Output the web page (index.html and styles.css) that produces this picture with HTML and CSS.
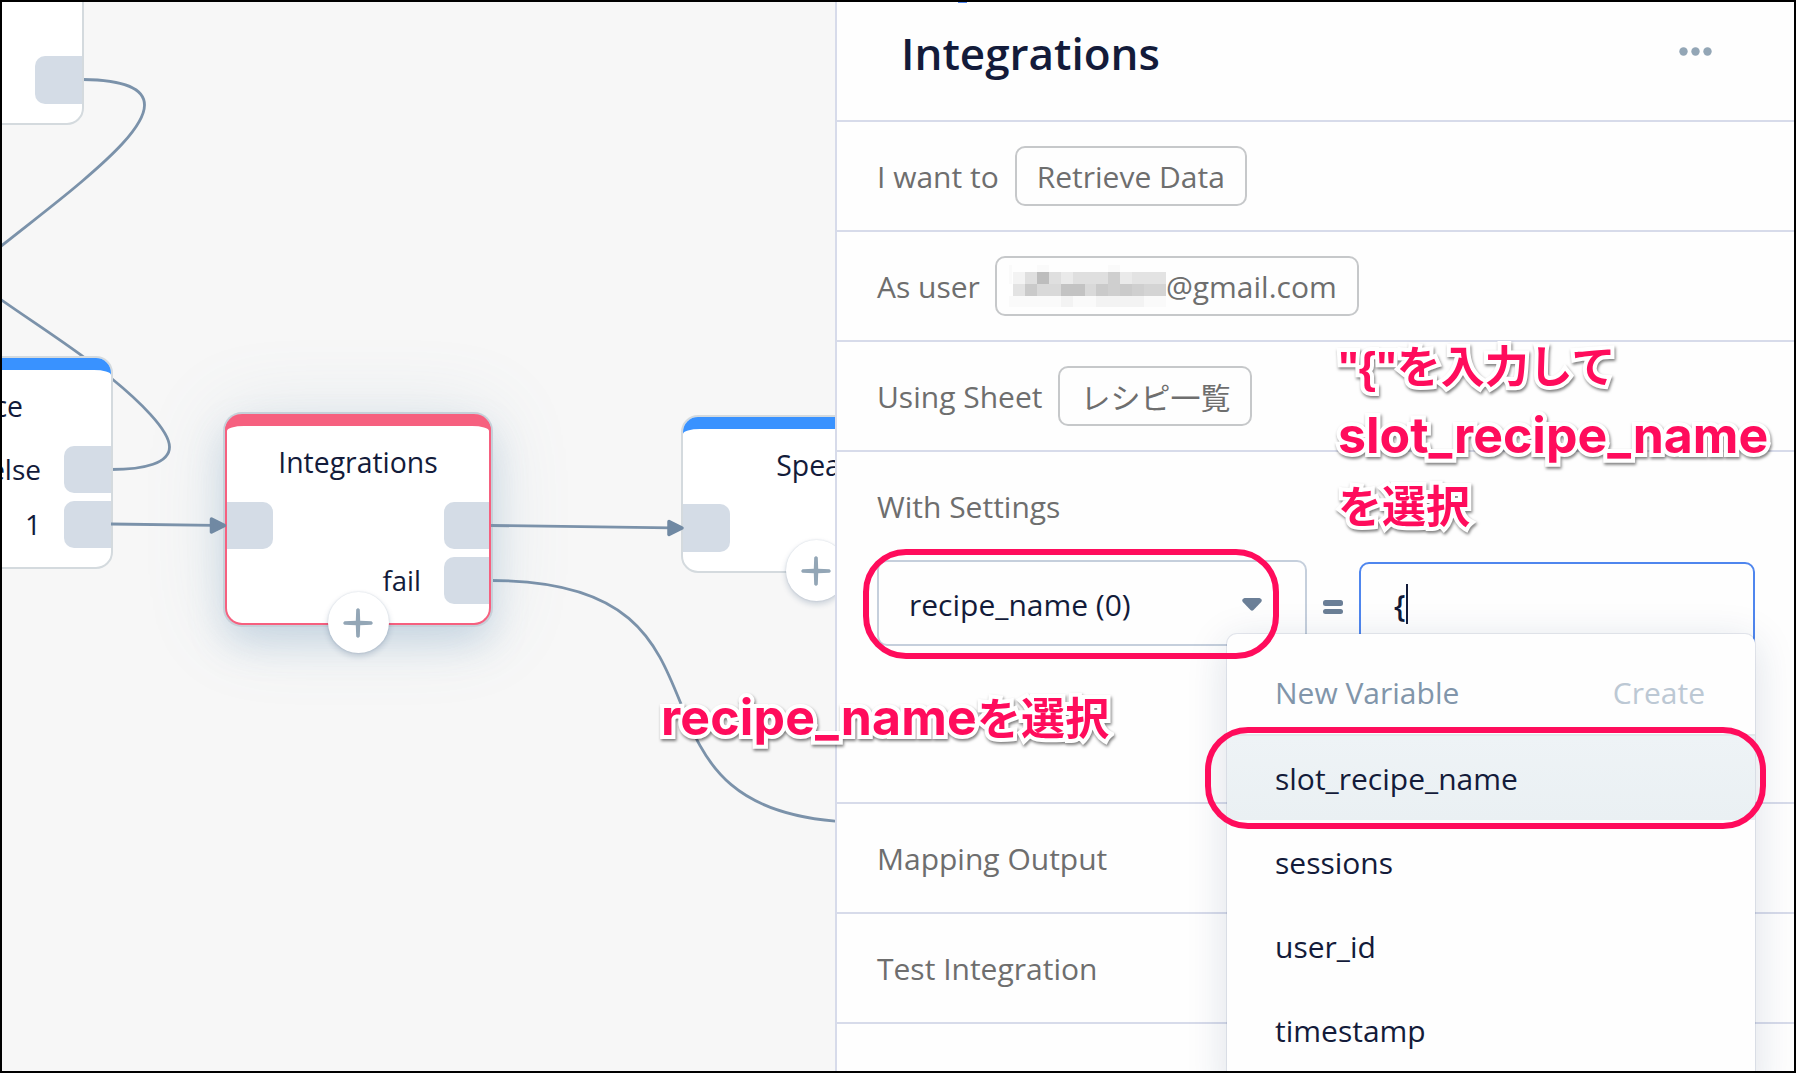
FILE: index.html
```html
<!DOCTYPE html>
<html lang="ja">
<head>
<meta charset="utf-8">
<title>Integrations</title>
<link rel="stylesheet" href="styles.css">
</head>
<body>
<div class="app">
  <main class="canvas">
    <svg class="wires" width="833" height="1069" viewBox="2 2 833 1069">
      <path d="M83 79.5C124 80 144.5 88 144.5 105C144.5 127 107 160 83 180.5C58 202 30 223 0 247"/>
      <path d="M0 299C30 320 58 338 85 358L111 378C138 400 169.5 430 169.5 447C169.5 463 145 469.5 111 469.5"/>
      <path d="M491 580.5C771 580.5 589 822.5 869 822.5"/>
    </svg>

    <section class="node node-start">
      <span class="port port-right p-start"></span>
    </section>

    <section class="node node-choice">
      <span class="bar"></span>
      <h2 class="node-title t-choice">Choice</h2>
      <span class="port-label l-else">else</span><span class="port port-right p-else"></span>
      <span class="port-label l-one">1</span><span class="port port-right p-one"></span>
    </section>

    <section class="node node-active">
      <span class="bar"></span>
      <h2 class="node-title">Integrations</h2>
      <span class="port port-left p-in"></span>
      <span class="port port-right p-ok"></span>
      <span class="port-label l-fail">fail</span><span class="port port-right p-fail"></span>
    </section>

    <section class="node node-speak">
      <span class="bar"></span>
      <h2 class="node-title t-speak">Speak</h2>
      <span class="port port-left p-speak"></span>
    </section>

    <svg class="wires" width="833" height="1069" viewBox="2 2 833 1069">
      <path d="M111 524L214 525.3M491 525.5L671 527.8"/>
      <path class="arrow" d="M211.5 519L224.5 525.5L211.5 532Z"/>
      <path class="arrow" d="M669 521.5L682 528L669 534.5Z"/>
    </svg>

    <button class="add add-active"><svg width="30" height="30" viewBox="0 0 30 30"><path d="M13.2 1.5Q15 -1 16.8 1.5L17.2 12.8L28.5 13.2Q31 15 28.5 16.8L17.2 17.2L16.8 28.5Q15 31 13.2 28.5L12.8 17.2L1.5 16.8Q-1 15 1.5 13.2L12.8 12.8Z"/></svg></button>
    <button class="add add-speak"><svg width="30" height="30" viewBox="0 0 30 30"><path d="M13.2 1.5Q15 -1 16.8 1.5L17.2 12.8L28.5 13.2Q31 15 28.5 16.8L17.2 17.2L16.8 28.5Q15 31 13.2 28.5L12.8 17.2L1.5 16.8Q-1 15 1.5 13.2L12.8 12.8Z"/></svg></button>
  </main>

  <aside class="panel">
    <header class="panel-head">
      <span class="tab-mark"></span>
      <h1>Integrations</h1>
      <svg class="dots" width="33" height="9" viewBox="0 0 33 9"><circle cx="4.5" cy="4.5" r="4.2"/><circle cx="16.5" cy="4.5" r="4.2"/><circle cx="28.5" cy="4.5" r="4.2"/></svg>
    </header>
    <div class="row"><span>I want to</span><span class="pill">Retrieve Data</span></div>
    <div class="row row-user"><span>As user</span><span class="pill pill-mail">
      <svg class="mosaic" width="157" height="42" viewBox="0 0 157 42" shape-rendering="crispEdges">
        <path fill="#fafafa" d="M28 0h12v7H28zM0 0h3v19H0zM99 0h12v7H99zM0 31h157v11H0z"/>
        <path fill="#f3f3f3" d="M4 7h12v12H4zM52 31h12v11H52zM87 31h48v11H87z"/>
        <path fill="#eaeaea" d="M52 7h12v12H52zM111 7h12v12H111z"/>
        <path fill="#e3e3e3" d="M123 7h34v12H123zM4 19h12v12H4z"/>
        <path fill="#dfdfdf" d="M16 7h12v12H16zM40 7h12v12H40zM64 7h35v12H64z"/>
        <path fill="#bdbdbd" d="M28 7h12v12H28z"/>
        <path fill="#c3c3c3" d="M52 19h24v12H52z"/>
        <path fill="#cacaca" d="M16 19h12v12H16zM87 19h12v12H87zM111 19h12v12H111z"/>
        <path fill="#cfcfcf" d="M99 7h12v24H99zM123 19h12v12H123z"/>
        <path fill="#d9d9d9" d="M28 19h24v12H28zM76 19h11v12H76z"/>
        <path fill="#d4d4d4" d="M135 19h22v12H135z"/>
      </svg>@gmail.com</span></div>
    <div class="row"><span>Using Sheet</span><span class="pill pill-sheet">レシピ一覧</span></div>
    <div class="settings">
      <div class="settings-label">With Settings</div>
      <div class="settings-fields">
        <div class="select"><span>recipe_name (0)</span><svg width="20" height="13" viewBox="0 0 20 13"><path d="M2.5 0H17.5Q21 1 19.2 4L11.5 12Q10 13.5 8.5 12L.8 4Q-1 1 2.5 0Z"/></svg></div>
        <div class="equals"><i></i><i></i></div>
        <div class="input">{<span class="cursor"></span></div>
      </div>
    </div>
    <div class="row">Mapping Output</div>
    <div class="row">Test Integration</div>

    <div class="menu">
      <div class="menu-new"><span>New Variable</span><span class="create">Create</span></div>
      <div class="item selected">slot_recipe_name</div>
      <div class="item">sessions</div>
      <div class="item">user_id</div>
      <div class="item">timestamp</div>
    </div>
  </aside>
</div>

<div class="ring ring-select"></div>
<div class="ring ring-item"></div>
<p class="note note-left"><span class="latin">recipe_name</span>を選択</p>
<p class="note note-right"><span class="quote">"{"</span>を入力して<br><span class="latin">slot_recipe_name</span><br>を選択</p>
</body>
</html>
```
FILE: styles.css
```css
* { box-sizing: border-box; }
body {
  margin: 0;
  width: 1796px;
  height: 1073px;
  overflow: hidden;
  position: relative;
  font-family: "Open Sans", "Noto Sans CJK JP", sans-serif;
  color: #131b3a;
}
h1, h2, p { margin: 0; }
.app {
  width: 1796px;
  height: 1073px;
  border: 2px solid #000;
  display: flex;
  overflow: hidden;
}

/* flow canvas */
.canvas {
  width: 833px;
  flex: none;
  position: relative;
  overflow: hidden;
  background: #f7f7f7;
}
.wires { position: absolute; left: 0; top: 0; }
.wires path { fill: none; stroke: #7b92aa; stroke-width: 2.8; }
.wires .arrow { fill: #7089a3; stroke: #7089a3; stroke-width: 3.5; stroke-linejoin: round; }
.node {
  position: absolute;
  background: #fff;
  border: 2px solid #d4dade;
  border-radius: 17px;
}
.node .bar {
  position: absolute;
  left: 0; right: 0; top: 0;
  height: 18px;
  border-radius: 15px 15px 0 0;
  background: #3992ff;
}
.node .bar::after {
  content: "";
  position: absolute;
  left: 0; right: 0; top: 11.5px; bottom: 0;
  background: #fff;
  border-radius: 17px 17px 0 0 / 5px 5px 0 0;
}
.node-start { left: -102px; top: -80px; width: 184px; height: 203px; }
.node-choice { left: -156px; top: 354px; width: 267px; height: 213px; }
.node-active {
  left: 223px; top: 412px; width: 266px; height: 211px;
  border: 2px solid #f6607f;
  border-top-width: 0;
  box-shadow: 0 0 0 2px #c6d0d9, 0 18px 36px rgba(100, 145, 185, .26), 0 3px 80px rgba(100, 145, 170, .17);
}
.node-active .bar { left: -2px; right: -2px; background: #f6607f; border-radius: 17px 17px 0 0; }
.node-active .bar::after { left: 2px; right: 2px; }
.node-speak { left: 679px; top: 413px; width: 268px; height: 158px; }
.node-title {
  position: absolute;
  left: 0; right: 0; top: 29px;
  text-align: center;
  font-size: 28.4px;
  line-height: 38px;
  font-weight: 400;
}
.t-choice { left: auto; right: 88px; }
.t-speak { left: 2px; }
.port { position: absolute; width: 47px; height: 47.5px; background: #d4dce6; }
.port-right { right: 0; border-radius: 10px 0 0 10px; }
.port-left { left: 0; border-radius: 0 10px 10px 0; }
.p-start { top: 132px; }
.p-else { top: 87.5px; }
.p-one { top: 142.5px; }
.node-active .port { width: 45.5px; }
.p-in, .p-ok { top: 87.5px; }
.p-fail { top: 142.5px; }
.p-speak { top: 87px; }
.port-label { position: absolute; font-size: 28px; line-height: 38px; }
.l-else { right: 70px; top: 92px; }
.l-one { right: 70px; top: 147px; }
.l-fail { right: 68px; top: 148px; font-size: 27.5px; }
.add {
  position: absolute;
  width: 61px; height: 61px;
  padding: 0;
  border: 0;
  border-radius: 50%;
  background: #fff;
  display: flex;
  align-items: center;
  justify-content: center;
  box-shadow: 0 0 2px rgba(17, 49, 96, .16), 0 3px 6px rgba(17, 49, 96, .2);
}
.add svg { fill: #93a6b6; display: block; }
.add-active { left: 325.5px; top: 590px; }
.add-speak { left: 783.5px; top: 538px; }

/* editor panel */
.panel {
  flex: 1;
  position: relative;
  border-left: 2px solid #d7dbea;
  background: #fefefe;
  color: #6e6e6e;
  font-size: 30px;
}
.panel-head {
  position: relative;
  height: 120px;
  border-bottom: 2px solid #d7dbea;
  padding: 0 83px 17px 64px;
  display: flex;
  align-items: center;
  justify-content: space-between;
}
.panel-head h1 { font-size: 44px; line-height: 60px; font-weight: 600; color: #131b3a; }
.tab-mark { position: absolute; left: 121px; top: 0; width: 9px; height: 1px; background: #4f86ee; }
.dots { fill: #93a6b6; margin-top: -2px; }
.row {
  height: 110px;
  border-bottom: 2px solid #d7dbea;
  padding: 0 40px;
  display: flex;
  align-items: center;
  gap: 16px;
  white-space: nowrap;
}
.row-user { gap: 15px; }
.pill {
  height: 60px;
  border: 2px solid #c6c8ca;
  border-radius: 10px;
  padding: 0 20px;
  display: flex;
  align-items: center;
}
.pill-mail { padding-left: 12px; }
.mosaic { flex: none; }
.settings { height: 352px; border-bottom: 2px solid #d7dbea; padding: 0 40px; }
.settings-label { height: 108px; line-height: 110px; }
.settings-fields { display: flex; align-items: flex-start; }
.select {
  width: 430px;
  height: 86px;
  border: 2px solid #c5cfdc;
  border-radius: 10px;
  padding: 2px 43px 0 30px;
  display: flex;
  align-items: center;
  justify-content: space-between;
  color: #131b3a;
}
.select svg { fill: #6b7f97; }
.equals { width: 20px; margin: 40px 16px 0; display: grid; gap: 3px; }
.equals i { height: 5.5px; border-radius: 2.5px; background: #6b7f97; }
.input {
  width: 396px;
  height: 86px;
  margin-top: 2px;
  border: 2px solid #4f86ee;
  border-radius: 10px;
  padding: 0 0 0 33px;
  display: flex;
  align-items: center;
  color: #131b3a;
  font-weight: 600;
}
.cursor { width: 2px; height: 40px; margin-bottom: 3px; background: #131b3a; }
.menu {
  position: absolute;
  left: 390px; top: 632px;
  width: 528px; height: 460px;
  background: #fefefe;
  border-radius: 10px;
  box-shadow: 0 0 0 1px rgba(17, 49, 96, .09), 0 8px 40px rgba(17, 49, 96, .15);
  color: #131b3a;
}
.menu-new { height: 100px; padding: 16px 50px 0 48px; display: flex; justify-content: space-between; align-items: center; color: #8195aa; }
.menu .create { color: #bcc8d4; }
.item { height: 84px; padding: 0 48px; display: flex; align-items: center; }
.selected { height: 86px; background: linear-gradient(#eef3f6, #eaf0f3); border-top: 2px solid #e4eaee; }

/* annotations drawn over the screen */
.ring { position: absolute; border: 6px solid #ff0c5c; }
.ring-select { left: 863px; top: 549px; width: 416px; height: 110px; border-radius: 43px; }
.ring-item { left: 1205px; top: 727px; width: 561px; height: 102px; border-radius: 43px; }
.note {
  position: absolute;
  font-family: Inter, "Noto Sans CJK JP", sans-serif;
  font-weight: 700;
  font-size: 44px;
  line-height: 70px;
  color: #ff0c5c;
  white-space: nowrap;
  -webkit-text-stroke: 8px #fff;
  paint-order: stroke fill;
  stroke-linejoin: round;
  filter: drop-shadow(1px 2px 1.5px rgba(0, 0, 0, .5));
}
.latin { font-size: 50px; line-height: 1; }
.quote { font-family: "Liberation Sans", sans-serif; line-height: 1; }
.note-left { left: 661px; top: 684px; letter-spacing: .15px; }
.note-right { left: 1338px; top: 332px; }
```
